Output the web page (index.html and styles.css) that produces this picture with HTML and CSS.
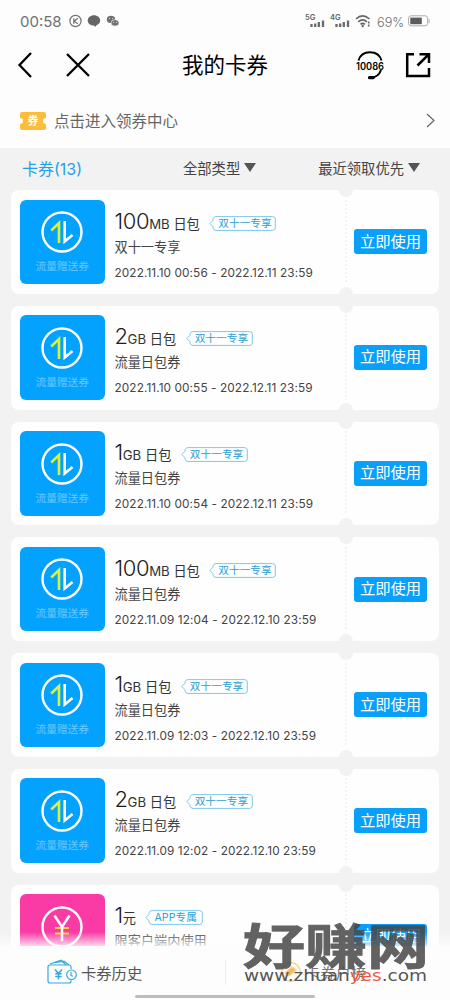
FILE: index.html
```
<!DOCTYPE html>
<html lang="zh-CN">
<head>
    <meta charset="UTF-8">
    <meta name="viewport" content="width=device-width, initial-scale=1.0">
    <title>我的卡券</title>
    <link rel="stylesheet" href="styles.css">
</head>
<body>

    <!-- shared icons -->
    <svg class="defs" width="0" height="0">
        <symbol id="flow" viewBox="0 0 42 42">
            <circle cx="21" cy="21" r="19.5" fill="none" stroke="#fff" stroke-width="2.4"/>
            <path d="M10.200 19.500L18 12V32" fill="none" stroke="#d9f23c" stroke-width="2.6"/>
            <path d="M23.700 10V30.500L31.500 24" fill="none" stroke="#fff" stroke-width="2.6"/>
        </symbol>
        <symbol id="yuan" viewBox="0 0 42 42">
            <circle cx="21" cy="21" r="19.5" fill="none" stroke="#fff" stroke-width="2.4"/>
            <path d="M14 22H28M14 27.5H28" stroke="#ffd23c" stroke-width="2.2"/>
            <path d="M13.5 9.5L21 21L28.5 9.5M21 21V35" fill="none" stroke="#fff" stroke-width="2.5"/>
        </symbol>
        <symbol id="tag" viewBox="0 0 67 15">
            <path d="M7 .6H63.5Q66.3 .6 66.3 3V12Q66.3 14.4 63.5 14.4H7Q4.7 14.4 4.2 12.3L3.8 10.5L.8 7.5L3.8 4.5L4.2 2.7Q4.7 .6 7 .6Z" fill="#fff" stroke="#7cc8ea" stroke-width="1"/>
        </symbol>
        <symbol id="tag-short" viewBox="0 0 58 15">
            <path d="M7 .6H54.5Q57.3 .6 57.3 3V12Q57.3 14.4 54.5 14.4H7Q4.7 14.4 4.2 12.3L3.8 10.5L.8 7.5L3.8 4.5L4.2 2.7Q4.7 .6 7 .6Z" fill="#fff" stroke="#7cc8ea" stroke-width="1"/>
        </symbol>
    </svg>

    <div class="status">
        <span class="clock">00:58</span>
        <svg width="52" height="14" viewBox="0 0 52 14">
            <circle cx="7.500" cy="7" r="5.600" fill="none" stroke="#707070" stroke-width="1.200"/>
            <path d="M5.800 4.300V9.700M9.800 4.300L6.100 7.200L9.800 9.700" fill="none" stroke="#707070" stroke-width="1.200"/>
            <path d="M26 1.200C22.500 1.200 19.700 3.500 19.700 6.500C19.700 9.500 22.500 11.600 26 11.600L27 13L28.500 11.200C31 10.300 32.200 8.500 32.200 6.500C32.200 3.500 29.500 1.200 26 1.200Z" fill="#666"/>
            <ellipse cx="43" cy="5.400" rx="4.200" ry="3.600" fill="#707070"/>
            <ellipse cx="47" cy="8.900" rx="4" ry="3.200" fill="#707070" stroke="#fff" stroke-width=".6"/>
            <path d="M41.200 4.600H42M44 4.600H44.800M45.200 8.400H46M48 8.400H48.800" stroke="#fff" stroke-width=".9"/>
        </svg>
        <svg class="signals" width="68" height="16" viewBox="0 0 68 16">
            <text x="0" y="7" class="net">5G</text>
            <text x="25" y="7" class="net">4G</text>
            <path d="M6.500 11V14M10.200 10.500V14M13.800 9V14M18 7.500V14M31.500 11V14M35.200 10.500V14M38.800 9V14M43 7.500V14" stroke="#6a6a6a" stroke-width="2.300"/>
            <path d="M51 6Q57.500 -.2 64.500 6M53.200 8.800Q57.700 4.900 62 8.800M55.500 11.400Q57.700 9.400 60 11.400" fill="none" stroke="#666" stroke-width="1.600"/>
            <circle cx="57.700" cy="13" r="1.200" fill="#666"/>
            <path d="M63.700 8.500V13.500" stroke="#666" stroke-width="1.600" stroke-dasharray="2 1"/>
        </svg>
        <span class="percent">69%</span>
        <svg width="22" height="12" viewBox="0 0 22 12">
            <rect x=".6" y=".8" width="19" height="10" rx="2.500" fill="#fff" stroke="#aaa"/>
            <rect x="2.300" y="2.600" width="11.500" height="6.600" fill="#5c5c5c"/>
            <path d="M21 4V8" stroke="#aaa"/>
        </svg>
    </div>

    <header class="navbar">
        <svg class="back" width="16" height="26" viewBox="0 0 16 26">
            <path d="M14 1L2.500 13L14 25" fill="none" stroke="#000" stroke-width="2.300"/>
        </svg>
        <svg class="close" width="24" height="24" viewBox="0 0 24 24">
            <path d="M1 1L23 23M23 1L1 23" stroke="#000" stroke-width="2.300"/>
        </svg>
        <h1>我的卡券</h1>
        <svg class="service" width="30" height="30" viewBox="0 0 30 30">
            <path d="M3.500 10.500C5 5 9.500 2.200 15 2.200C20.500 2.200 25 5 26.500 10.500M26 20C24.500 24.500 20.500 27.500 15.500 27.800" fill="none" stroke="#000" stroke-width="2"/>
            <path d="M14.500 27.700H18" stroke="#000" stroke-width="3.200" stroke-linecap="round"/>
            <text x="1" y="19.500" textLength="28" lengthAdjust="spacingAndGlyphs">10086</text>
        </svg>
        <svg class="share" width="26" height="26" viewBox="0 0 26 26">
            <path d="M9 2.200H2.200V24H24V16M14.500 2.200H24V11M24 2.200L12.500 13.500" fill="none" stroke="#000" stroke-width="2.500"/>
        </svg>
    </header>

    <a class="center-link">
        <svg width="26" height="18" viewBox="0 0 26 18">
            <path d="M2 0H24Q26 0 26 2V6A3 3 0 0 0 26 12V16Q26 18 24 18H2Q0 18 0 16V12A3 3 0 0 0 0 6V2Q0 0 2 0Z" fill="#fbbd3a"/>
            <text x="7.500" y="13" class="ticket">券</text>
        </svg>
        <span>点击进入领券中心</span>
        <svg class="arrow" width="9" height="15" viewBox="0 0 9 15">
            <path d="M1 1L8 7.500L1 14" fill="none" stroke="#666" stroke-width="1.200"/>
        </svg>
    </a>

    <div class="filters">
        <span class="count">卡券(13)</span>
        <span class="filter type">全部类型<i></i></span>
        <span class="filter">最近领取优先<i></i></span>
    </div>

    <main class="list">
        <div class="card">
            <div class="cover">
                <svg width="42" height="42"><use href="#flow"/></svg>
                <span>流量赠送券</span>
            </div>
            <div class="info">
                <div class="name"><b>100</b><em>MB 日包</em><span class="tag"><svg><use href="#tag"/></svg><span>双十一专享</span></span></div>
                <div class="desc">双十一专享</div>
                <div class="date">2022.11.10 00:56 - 2022.12.11 23:59</div>
            </div>
            <div class="action"><button>立即使用</button></div>
        </div>
        <div class="card">
            <div class="cover">
                <svg width="42" height="42"><use href="#flow"/></svg>
                <span>流量赠送券</span>
            </div>
            <div class="info">
                <div class="name"><b>2</b><em>GB 日包</em><span class="tag"><svg><use href="#tag"/></svg><span>双十一专享</span></span></div>
                <div class="desc">流量日包券</div>
                <div class="date">2022.11.10 00:55 - 2022.12.11 23:59</div>
            </div>
            <div class="action"><button>立即使用</button></div>
        </div>
        <div class="card">
            <div class="cover">
                <svg width="42" height="42"><use href="#flow"/></svg>
                <span>流量赠送券</span>
            </div>
            <div class="info">
                <div class="name"><b>1</b><em>GB 日包</em><span class="tag"><svg><use href="#tag"/></svg><span>双十一专享</span></span></div>
                <div class="desc">流量日包券</div>
                <div class="date">2022.11.10 00:54 - 2022.12.11 23:59</div>
            </div>
            <div class="action"><button>立即使用</button></div>
        </div>
        <div class="card">
            <div class="cover">
                <svg width="42" height="42"><use href="#flow"/></svg>
                <span>流量赠送券</span>
            </div>
            <div class="info">
                <div class="name"><b>100</b><em>MB 日包</em><span class="tag"><svg><use href="#tag"/></svg><span>双十一专享</span></span></div>
                <div class="desc">流量日包券</div>
                <div class="date">2022.11.09 12:04 - 2022.12.10 23:59</div>
            </div>
            <div class="action"><button>立即使用</button></div>
        </div>
        <div class="card">
            <div class="cover">
                <svg width="42" height="42"><use href="#flow"/></svg>
                <span>流量赠送券</span>
            </div>
            <div class="info">
                <div class="name"><b>1</b><em>GB 日包</em><span class="tag"><svg><use href="#tag"/></svg><span>双十一专享</span></span></div>
                <div class="desc">流量日包券</div>
                <div class="date">2022.11.09 12:03 - 2022.12.10 23:59</div>
            </div>
            <div class="action"><button>立即使用</button></div>
        </div>
        <div class="card">
            <div class="cover">
                <svg width="42" height="42"><use href="#flow"/></svg>
                <span>流量赠送券</span>
            </div>
            <div class="info">
                <div class="name"><b>2</b><em>GB 日包</em><span class="tag"><svg><use href="#tag"/></svg><span>双十一专享</span></span></div>
                <div class="desc">流量日包券</div>
                <div class="date">2022.11.09 12:02 - 2022.12.10 23:59</div>
            </div>
            <div class="action"><button>立即使用</button></div>
        </div>
        <div class="card">
            <div class="cover pink">
                <svg width="42" height="42"><use href="#yuan"/></svg>
            </div>
            <div class="info">
                <div class="name"><b>1</b><em>元</em><span class="tag short"><svg><use href="#tag-short"/></svg><span>APP专属</span></span></div>
                <div class="desc">限客户端内使用</div>
            </div>
            <div class="action"><button>立即使用</button></div>
        </div>
    </main>

    <footer class="tabbar">
        <div class="tab">
            <svg width="30" height="26" viewBox="0 0 30 26" fill="none" stroke="#35a8e0" stroke-width="1.200">
                <path d="M24 21.500V22Q24 24 22 24H3Q1 24 1 22V8Q1 6 3 6H22Q24 6 24 8V10"/>
                <path d="M3 5L14 1.200L19 6M9 3.500L17 2.200L22 6"/>
                <path d="M8 10.500L11.500 14.500L15 10.500M11.500 14.500V20.500M8.300 14.700H14.700M8.300 17.500H14.700" stroke-width="1.500"/>
                <circle cx="24.500" cy="15.800" r="4.800" fill="#fdfdfd"/>
                <path d="M24 12.800V16.500L26 17.200"/>
            </svg>
            <span>卡券历史</span>
        </div>
        <div class="tab rank">
            <svg width="22" height="22" viewBox="0 0 22 22" fill="none" stroke="#f9cf80" stroke-width="1.300">
                <circle cx="11" cy="11" r="9.300"/>
                <path d="M5 12L12 6L16 9L9 15Z" fill="#f9b65a"/>
            </svg>
            <span>卡券户榜</span>
        </div>
        <div class="home"></div>
    </footer>

    <svg class="watermark" width="190" height="70" viewBox="0 0 190 70">
        <g transform="translate(0 47) scale(1 .9)">
            <text x="2" y="0" class="brand" textLength="186" lengthAdjust="spacingAndGlyphs">好赚网</text>
        </g>
        <text x="3" y="64" class="url" textLength="183" lengthAdjust="spacingAndGlyphs">www.zhuan<tspan class="red">yes</tspan>.com</text>
    </svg>

</body>
</html>
```

FILE: styles.css
```
* {
    box-sizing: border-box;
}

body {
    font-family: Inter, "Noto Sans CJK SC", sans-serif;
    background-color: #f2f2f2;
    color: #444;
    margin: 0;
    height: 1000px;
    overflow: hidden;
    position: relative;
}

svg {
    display: block;
    flex: none;
}

.defs {
    position: absolute;
}

/* Status bar */
.status {
    display: flex;
    align-items: center;
    height: 42px;
    padding: 0 20px;
    background-color: #fdfdfd;
    color: #707070;
}

.clock {
    font-size: 15px;
    width: 48px;
}

.signals {
    margin-left: auto;
    margin-right: 4px;
}

.net {
    font-size: 7.5px;
    font-weight: 600;
    fill: #666;
}

.percent {
    padding-top: 2px;
    font-size: 12.7px;
    font-weight: 300;
    width: 31px;
}

/* Nav bar */
.navbar {
    display: flex;
    align-items: center;
    height: 46px;
    padding: 0 19px 0 17px;
    background-color: #fdfdfd;
}

.close {
    margin-left: 33px;
}

h1 {
    flex: 1;
    margin: -4px 0 0;
    padding-left: 92px;
    font-size: 21.5px;
    font-weight: 400;
    color: #000;
}

.service {
    margin-right: 20px;
}

.service text {
    font-size: 10px;
    font-weight: 600;
}

/* Coupon center link */
.center-link {
    display: flex;
    align-items: center;
    height: 60px;
    padding: 5px 15px 0 20px;
    background-color: #fdfdfd;
    font-size: 15.5px;
    color: #666;
}

.center-link span {
    margin: -2px 0 0 8px;
}

.ticket {
    font-size: 11px;
    font-weight: 700;
    fill: #fff;
}

.arrow {
    margin-left: auto;
}

/* Filters */
.filters {
    display: flex;
    align-items: center;
    height: 42px;
    padding: 0 30px 3px 22px;
    font-size: 14.3px;
}

.count {
    font-size: 16px;
    color: #23a0ea;
    width: 161px;
}

.filter {
    display: flex;
    align-items: center;
}

.filter.type {
    margin-right: auto;
}

.filter i {
    margin-left: 4px;
    border: 6px solid transparent;
    border-top: 9px solid #555;
    border-bottom: 0;
}

/* Cards */
.list {
    display: flex;
    flex-direction: column;
    gap: 12px;
    padding: 0 11px;
}

.card {
    position: relative;
    display: flex;
    flex: none;
    height: 103.8px;
    padding: 9.5px 12px 10px 9px;
    border-radius: 8px;
    background-color: #fefefe;
}

/* notches on the tear line */
.card::before,
.card::after {
    content: "";
    position: absolute;
    left: 328px;
    width: 14px;
    height: 14px;
    border-radius: 50%;
    background-color: #f2f2f2;
}

.card::before {
    top: -7px;
}

.card::after {
    bottom: -7px;
}

.cover {
    display: flex;
    flex-direction: column;
    align-items: center;
    width: 84.5px;
    height: 84.5px;
    padding-top: 11.5px;
    border-radius: 6px;
    background-color: #03a2ff;
    color: #6cc8fc;
    font-size: 10.7px;
    line-height: 16px;
}

.cover span {
    margin-top: 6px;
    white-space: nowrap;
}

.pink {
    background-color: #fa3aa5;
}

.info {
    width: 240.5px;
    padding-left: 10px;
    white-space: nowrap;
}

.name {
    display: flex;
    align-items: baseline;
    height: 34px;
    line-height: 42px;
    color: #1c1c1c;
}

.name b {
    font-size: 22px;
    font-weight: 300;
    letter-spacing: -0.4px;
}

.name em {
    font-size: 13.2px;
    font-style: normal;
    color: #333;
}

.tag {
    position: relative;
    align-self: flex-start;
    width: 67px;
    height: 15px;
    margin: 16px 0 0 9.5px;
    padding-left: 9px;
    font-size: 10.7px;
    line-height: 15px;
    color: #2c9fd4;
}

.tag svg {
    position: absolute;
    left: 0;
    top: 0;
    width: 100%;
    height: 100%;
}

.tag > span {
    position: relative;
}

.tag.short {
    width: 58px;
}

.desc {
    height: 27px;
    font-size: 13.2px;
    line-height: 27px;
}

.date {
    padding-top: 1px;
    font-size: 11.8px;
    line-height: 22px;
    letter-spacing: 0.1px;
}

.action {
    display: flex;
    align-items: center;
    justify-content: flex-end;
    flex: 1;
    background: repeating-linear-gradient(#f2f2f2 0 2px, #fefefe 2px 4px) no-repeat;
    background-size: 2px 100%;
}

button {
    width: 73px;
    height: 25px;
    padding: 0;
    border: 0;
    border-radius: 3px;
    background-color: #08a0fb;
    color: #fff;
    font-family: inherit;
    font-size: 15.3px;
    line-height: 24px;
}

/* Bottom bar */
.tabbar {
    position: absolute;
    left: 0;
    right: 0;
    bottom: 0;
    display: flex;
    height: 54px;
    background-color: #fdfdfd;
}

.tabbar::before {
    content: "";
    position: absolute;
    left: 0;
    right: 0;
    top: -14px;
    height: 14px;
    background: linear-gradient(rgba(253, 253, 253, 0), rgba(253, 253, 253, 0.8));
}

.tab {
    display: flex;
    align-items: center;
    width: 226px;
    gap: 4px;
    padding: 0 0 2px 47px;
    font-size: 15.3px;
    color: #555;
}

.tab.rank {
    padding-left: 55px;
    gap: 3px;
    background: linear-gradient(#eee, #eee) no-repeat 0 14px;
    background-size: 1px 25px;
    color: #777;
}

.home {
    position: absolute;
    left: 135px;
    bottom: 2px;
    width: 180px;
    height: 3px;
    border-radius: 2px;
    background-color: #bdbdbd;
}

/* Site mark */
.watermark {
    position: absolute;
    left: 241px;
    top: 917px;
}

.brand {
    font-size: 53px;
    font-weight: 700;
    fill: #454545;
    stroke: #454545;
    stroke-width: 1;
    opacity: 0.84;
}

.url {
    font-family: "DejaVu Sans", sans-serif;
    font-size: 16px;
    fill: #555;
}

.red {
    fill: #f4593d;
}
```
